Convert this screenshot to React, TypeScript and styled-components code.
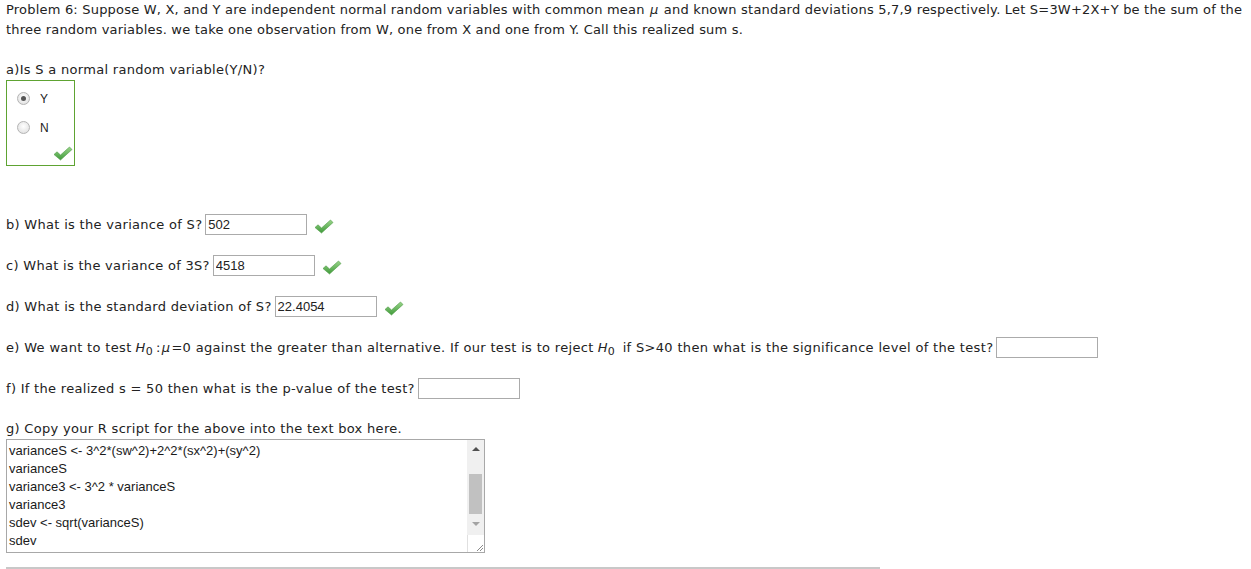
import styled, { createGlobalStyle } from 'styled-components';

const GlobalStyle = createGlobalStyle`
  html, body {
    margin: 0;
    padding: 0;
    background: #ffffff;
  }
  body {
    font-family: "DejaVu Sans", Verdana, sans-serif;
    font-size: 13px;
    letter-spacing: 0.3px;
    color: #222222;
  }
`;

const Page = styled.div`
  padding: 0 6px;
  width: 1239px;
`;

const Intro = styled.p`
  margin: 0 0 20px;
  line-height: 20px;
  letter-spacing: 0.2px;
`;

const Line = styled.div`
  line-height: 20px;
`;

const Mu = styled.i`
  font-style: italic;
  padding: 0 1px;
`;

const ChoiceBox = styled.div`
  width: 67px;
  height: 84px;
  border: 1px solid #5ea332;
  margin-bottom: 48px;
  position: relative;
`;

const Choice = styled.label`
  display: flex;
  align-items: center;
  height: 29px;
  padding-left: 10px;
  font-family: "Liberation Sans", Arial, sans-serif;
  font-size: 12px;
  letter-spacing: 0;

  &:first-child {
    margin-top: 3px;
  }
`;

const Radio = styled.span<{ $on?: boolean }>`
  width: 11px;
  height: 11px;
  border-radius: 50%;
  border: 1px solid #b4b4b4;
  background: radial-gradient(circle at 50% 40%, #ffffff 0%, #e6e6e6 70%, #d4d4d4 100%);
  margin-right: 10px;
  position: relative;

  &::after {
    content: '';
    display: ${p => (p.$on ? 'block' : 'none')};
    position: absolute;
    left: 3px;
    top: 3px;
    width: 5px;
    height: 5px;
    border-radius: 50%;
    background: #555555;
  }
`;

const BoxCheck = styled.span`
  position: absolute;
  left: 46px;
  top: 65px;
`;

const Question = styled.div<{ $wide?: boolean }>`
  display: flex;
  align-items: center;
  height: 21px;
  margin-bottom: 20px;
  white-space: nowrap;
  letter-spacing: ${p => (p.$wide ? '0.33px' : '0.3px')};
`;

const Answer = styled.input`
  width: 102px;
  height: 21px;
  box-sizing: border-box;
  border: 1px solid #ababab;
  margin: 0 0 0 3px;
  padding: 0 2px;
  font-family: "Liberation Sans", Arial, sans-serif;
  font-size: 13px;
  letter-spacing: 0;
  color: #222222;
  outline: none;
`;

const Mark = styled.span`
  display: inline-flex;
  margin-left: 7px;
  margin-top: 3px;
`;

const Math = styled.i`
  font-style: italic;
  margin: 0 3px 0 4px;

  sub {
    font-style: normal;
    font-size: 11px;
    vertical-align: -3px;
    line-height: 0;
  }
`;

const Label = styled.div`
  line-height: 20px;
`;

const ScriptWrap = styled.div`
  position: relative;
  width: 479px;
  height: 114px;
`;

const Script = styled.textarea`
  width: 479px;
  height: 114px;
  box-sizing: border-box;
  border: 1px solid #a8a8a8;
  margin: 0;
  padding: 2px 20px 0 2px;
  font-family: "Liberation Sans", Arial, sans-serif;
  font-size: 13px;
  letter-spacing: 0;
  line-height: 18px;
  color: #1a1a1a;
  resize: none;
  overflow: hidden;
  outline: none;
  display: block;
`;

const ScrollBar = styled.div`
  position: absolute;
  right: 1px;
  top: 1px;
  bottom: 1px;
  width: 17px;
  display: flex;
  flex-direction: column;
`;

const Track = styled.div`
  flex: 1;
  background: #f0f0f0;
  display: flex;
  flex-direction: column;
  align-items: center;
`;

const Arrow = styled.span<{ $down?: boolean; $dim?: boolean }>`
  width: 0;
  height: 0;
  margin: ${p => (p.$down ? '0 0 9px' : '7px 0 0')};
  border-left: 4px solid transparent;
  border-right: 4px solid transparent;
  ${p =>
    p.$down
      ? `border-top: 4px solid ${p.$dim ? '#a3a3a3' : '#505050'};`
      : `border-bottom: 4px solid ${p.$dim ? '#a3a3a3' : '#505050'};`}
`;

const Thumb = styled.div`
  width: 13px;
  height: 40px;
  background: #c1c1c1;
  margin-top: 23px;
  margin-bottom: auto;
`;

const Corner = styled.div`
  height: 17px;
  background: #ffffff;
  border-left: 1px solid #e0e0e0;
  display: flex;
  align-items: flex-end;
  justify-content: flex-end;
`;

const Rule = styled.hr`
  width: 874px;
  margin: 14px 0 0;
  border: 0;
  border-top: 2px solid #c8c8c8;
`;

function Check() {
  return (
    <svg width="20" height="15" viewBox="0 0 20 15">
      <defs>
        <linearGradient id="ck" x1="0" y1="0" x2="0" y2="1">
          <stop offset="0" stopColor="#9ad58a" />
          <stop offset="1" stopColor="#3f9a3a" />
        </linearGradient>
      </defs>
      <path
        d="M1 8.5 L4 5.8 L7.5 9 L16.5 1 L19 3.5 L7.5 14 Z"
        fill="url(#ck)"
        stroke="#4d9a44"
        strokeWidth="0.6"
        strokeLinejoin="round"
      />
    </svg>
  );
}

function Grip() {
  return (
    <svg width="9" height="9" viewBox="0 0 9 9">
      <path d="M8 2 L2 8 M8 5 L5 8" stroke="#8a8a8a" strokeWidth="1" />
    </svg>
  );
}

const answers = [
  { q: 'b) What is the variance of S?', v: '502' },
  { q: 'c) What is the variance of 3S?', v: '4518' },
  { q: 'd) What is the standard deviation of S?', v: '22.4054' },
];

const script = `varianceS <- 3^2*(sw^2)+2^2*(sx^2)+(sy^2)
varianceS
variance3 <- 3^2 * varianceS
variance3
sdev <- sqrt(varianceS)
sdev`;

export default function App() {
  return (
    <Page>
      <GlobalStyle />
      <Intro>
        Problem 6: Suppose W, X, and Y are independent normal random variables with common mean <Mu>μ</Mu> and known
        standard deviations 5,7,9 respectively. Let S=3W+2X+Y be the sum of the three random variables. we take one
        observation from W, one from X and one from Y. Call this realized sum s.
      </Intro>

      <Line>a)Is S a normal random variable(Y/N)?</Line>
      <ChoiceBox>
        <Choice>
          <Radio $on />Y
        </Choice>
        <Choice>
          <Radio />N
        </Choice>
        <BoxCheck>
          <Check />
        </BoxCheck>
      </ChoiceBox>

      {answers.map(a => (
        <Question key={a.q}>
          {a.q}
          <Answer defaultValue={a.v} />
          <Mark>
            <Check />
          </Mark>
        </Question>
      ))}

      <Question $wide>
        e) We want to test
        <Math>
          H<sub>0</sub>
        </Math>
        :<Mu>μ</Mu>=0 against the greater than alternative. If our test is to reject
        <Math>
          H<sub>0</sub>
        </Math>
        &nbsp;if S&gt;40 then what is the significance level of the test?
        <Answer />
      </Question>

      <Question>
        f) If the realized s = 50 then what is the p-value of the test?
        <Answer />
      </Question>

      <Label>g) Copy your R script for the above into the text box here.</Label>
      <ScriptWrap>
        <Script defaultValue={script} spellCheck={false} />
        <ScrollBar>
          <Track>
            <Arrow />
            <Thumb />
            <Arrow $down $dim />
          </Track>
          <Corner>
            <Grip />
          </Corner>
        </ScrollBar>
      </ScriptWrap>
      <Rule />
    </Page>
  );
}
